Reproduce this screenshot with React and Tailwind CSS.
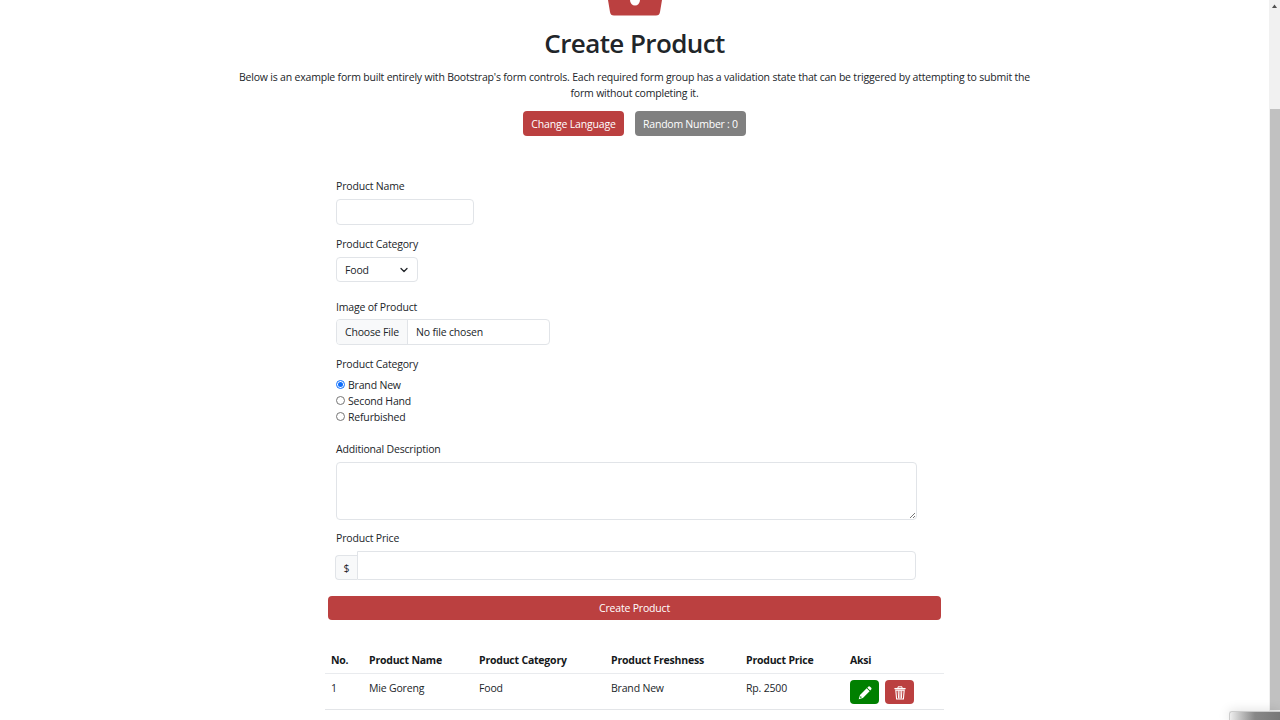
const box = "border border-[#e1e4e8] bg-white";

function PencilIcon() {
  return (
    <svg className="size-[14px]" viewBox="0 0 14 14" fill="currentColor">
      <path d="M9.3 1.7L10.5 .6Q11.3 0 12.1 .7L13.2 1.8Q13.9 2.6 13.2 3.4L12.2 4.5Z" />
      <path fillRule="evenodd" d="M8.7 2.3L11.6 5.2L4.9 11.9L.7 13.3L2 9Z M2.6 10.1L2 12L3.9 11.3Z" />
    </svg>
  );
}

function TrashIcon() {
  return (
    <svg className="h-[14px] w-3" viewBox="0 0 12 14" fill="none" stroke="currentColor">
      <path d="M4 2V.8H8V2" strokeWidth="1" />
      <path d="M.4 2.6H11.6" strokeWidth="1.3" />
      <path d="M1.8 4.1L2.6 13H9.4L10.2 4.1Z" strokeWidth="1.1" />
      <path d="M4.2 4.2L4.6 12.5M6 4.2V12.5M7.8 4.2L7.4 12.5" strokeWidth="1" />
    </svg>
  );
}

function Label({ children, className = "" }) {
  return <label className={`block h-4 ${className}`}>{children}</label>;
}

function Radio({ label, checked }) {
  return (
    <label className="flex h-4 items-center gap-[3px]">
      <span
        className={`mb-px flex size-[9px] items-center justify-center rounded-full border bg-white ${
          checked ? "border-[#0d6efd]" : "border-[#767676]"
        }`}
      >
        {checked && <span className="size-[5px] rounded-full bg-[#0d6efd]" />}
      </span>
      <span>{label}</span>
    </label>
  );
}

export default function App() {
  return (
    <div className="relative flex h-[720px] w-[1280px] overflow-hidden bg-white font-['Open_Sans','Noto_Sans',sans-serif] text-[10.5px] leading-4 tracking-[-0.18px] text-[#212529]">
      <main className="flex h-full w-[1269px] flex-col items-center">
        <svg className="h-4 w-[54px] shrink-0" viewBox="0 0 54 16">
          <path d="M0 0H54L52 12Q51.5 15.5 48 15.5H6Q2.5 15.5 2 12Z" fill="#bb4040" />
          <ellipse cx="27" cy="0" rx="5" ry="5.5" fill="#fff" />
        </svg>
        <h1 className="mt-[11px] h-8 text-[26px] leading-8 font-semibold tracking-[-0.6px]">Create Product</h1>
        <p className="mt-[10px] h-8 w-[810px] text-center tracking-[-0.197px]">
          Below is an example form built entirely with Bootstrap's form controls. Each required form group has a validation state that can be triggered by attempting to submit the
          <br />
          form without completing it.
        </p>
        <div className="mt-[10px] flex gap-[11px] text-white">
          <button className="h-[25px] w-[101px] rounded bg-[#bb4040]">Change Language</button>
          <button className="h-[25px] w-[111px] rounded bg-[#808080] tracking-[-0.24px]">Random Number : 0</button>
        </div>

        <form className="mt-[42px] flex w-[613px] flex-col">
          <div className="flex flex-col items-start px-2">
            <Label>Product Name</Label>
            <div className={`${box} mt-[5px] h-[26px] w-[138px] rounded`} />
            <Label className="mt-[11px]">Product Category</Label>
            <div className={`${box} mt-[5px] flex h-[25px] w-[82px] items-center justify-between rounded-sm pr-[9px] pl-2`}>
              <span>Food</span>
              <svg className="size-2" viewBox="0 0 8 8" fill="none" stroke="#212529" strokeWidth="1.3" strokeLinecap="round" strokeLinejoin="round">
                <path d="M1 2.5L4 5.5L7 2.5" />
              </svg>
            </div>
            <Label className="mt-[17px]">Image of Product</Label>
            <div className={`${box} mt-1 flex h-[26px] w-[214px] items-stretch overflow-hidden rounded leading-6`}>
              <span className="w-[71px] border-r border-[#e1e4e8] bg-[#f8f9fa] pl-2">Choose File</span>
              <span className="pl-2">No file chosen</span>
            </div>
            <Label className="mt-[11px]">Product Category</Label>
            <div className="mt-[5px] flex flex-col">
              <Radio label="Brand New" checked />
              <Radio label="Second Hand" />
              <Radio label="Refurbished" />
            </div>
            <Label className="mt-4">Additional Description</Label>
            <div className={`${box} mt-[5px] flex h-[58px] w-[581px] items-end justify-end rounded`}>
              <svg className="size-[7px]" viewBox="0 0 7 7" stroke="#555" strokeWidth="0.8">
                <path d="M1 6L6 1M4 6L6 4" />
              </svg>
            </div>
            <Label className="mt-[10px]">Product Price</Label>
            <div className="mt-[5px] -ml-px flex h-[29px] w-[581px] items-end">
              <span className="h-[25px] w-[22px] rounded-l border border-r-0 border-[#e1e4e8] bg-[#f8f9fa] text-center leading-6">$</span>
              <div className={`${box} h-[29px] grow rounded-r`} />
            </div>
          </div>
          <button type="button" className="mt-4 h-6 w-[613px] rounded bg-[#bb4040] tracking-[-0.18px] text-white">Create Product</button>
        </form>

        <table className="mt-[27px] w-[619px] table-fixed border-collapse text-left">
          <colgroup>
            <col className="w-[38px]" />
            <col className="w-[110px]" />
            <col className="w-[132px]" />
            <col className="w-[135px]" />
            <col className="w-[104px]" />
            <col className="w-[100px]" />
          </colgroup>
          <thead>
            <tr className="h-[26px] border-b border-[#e9ebee] text-[#15181b]">
              {["No.", "Product Name", "Product Category", "Product Freshness", "Product Price", "Aksi"].map((h) => (
                <th key={h} className="p-0 pl-[6px] font-bold tracking-[-0.21px]">{h}</th>
              ))}
            </tr>
          </thead>
          <tbody>
            <tr className="h-9 border-b border-[#e3e5e8] align-top">
              {["1", "Mie Goreng", "Food", "Brand New", "Rp. 2500"].map((c) => (
                <td key={c} className="p-0 pt-[6px] pl-[6px]">{c}</td>
              ))}
              <td className="p-0 pt-[6px] pl-[6px]">
                <div className="flex gap-[6px] text-white">
                  <button className="flex h-6 w-[29px] items-center justify-center rounded bg-[#008000] pt-[3px]"><PencilIcon /></button>
                  <button className="flex h-6 w-[29px] items-center justify-center rounded bg-[#bb4040] pt-[3px]"><TrashIcon /></button>
                </div>
              </td>
            </tr>
          </tbody>
        </table>
      </main>
      <aside className="flex h-full w-[11px] flex-col items-end bg-[#f1f1f1]">
        <svg className="h-[109px] w-[11px]" viewBox="0 0 11 109"><path d="M3 8L5.5 4.5L8 8Z" fill="#505050" /></svg>
        <div className="h-[601px] w-[10px] bg-[#c1c1c1]" />
      </aside>
      <div className="absolute right-0 bottom-0 h-[9px] w-[51px] rounded-tl-[3px] border-t border-l border-[#ccc] bg-linear-to-r from-[#eee] via-[#888] to-[#777] shadow-[0_0_12px_rgba(0,0,0,0.15)]" />
    </div>
  );
}
